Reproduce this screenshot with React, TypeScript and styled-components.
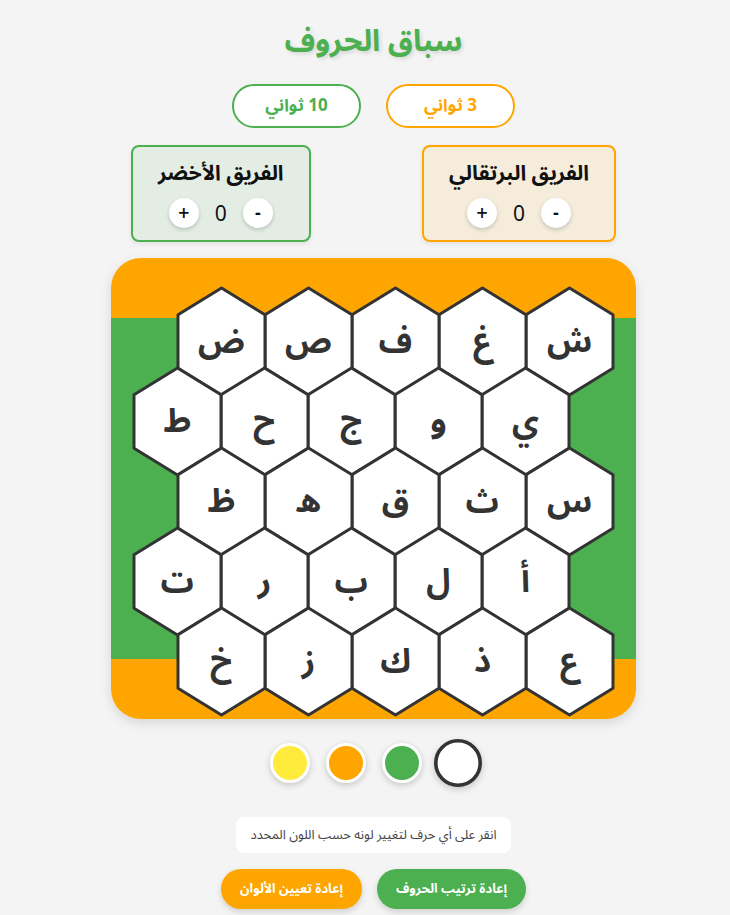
import React, { useState } from "react";
import styled, { createGlobalStyle } from "styled-components";

const ORANGE = "#FFA500";
const GREEN = "#4CAF50";
const YELLOW = "#FFEB3B";

const GlobalStyle = createGlobalStyle`
  html, body {
    margin: 0;
    padding: 0;
    background: #f4f4f4;
  }
  body {
    direction: rtl;
    font-family: "Noto Sans Arabic", "DejaVu Sans", sans-serif;
    color: #333;
  }
  * { box-sizing: border-box; }
`;

const Page = styled.div`
  display: flex;
  flex-direction: column;
  align-items: center;
  padding: 0 0 20px 17px;
`;

const Title = styled.h1`
  margin: 25px 0 0;
  font-size: 30px;
  line-height: 34px;
  font-weight: 700;
  color: ${GREEN};
  text-shadow: 2px 2px 4px rgba(0, 0, 0, 0.12);
`;

const TimerRow = styled.div`
  display: flex;
  gap: 25px;
  margin-top: 25px;
`;

const TimerButton = styled.button<{ $color: string }>`
  width: 129px;
  height: 44px;
  border-radius: 22px;
  border: 2px solid ${(p) => p.$color};
  background: #fff;
  color: ${(p) => p.$color};
  font-family: inherit;
  font-size: 17px;
  line-height: 20px;
  font-weight: 700;
  cursor: pointer;
`;

const TeamsRow = styled.div`
  width: 525px;
  display: flex;
  justify-content: space-between;
  padding: 0 20px;
  margin-top: 17px;
`;

const TeamCard = styled.div<{ $color: string; $bg: string }>`
  border: 2px solid ${(p) => p.$color};
  background: ${(p) => p.$bg};
  border-radius: 8px;
  padding: 13px 25px 12px;
  display: flex;
  flex-direction: column;
  align-items: center;
  box-shadow: 0 2px 5px rgba(0, 0, 0, 0.08);
`;

const TeamName = styled.div`
  font-size: 21px;
  line-height: 26px;
  height: 26px;
  font-weight: 700;
  color: #111;
  white-space: nowrap;
`;

const ScoreRow = styled.div`
  display: flex;
  align-items: center;
  gap: 12px;
  height: 30px;
  margin-top: 12px;
`;

const ScoreButton = styled.button`
  width: 30px;
  height: 30px;
  border-radius: 50%;
  border: none;
  background: #fff;
  box-shadow: 0 2px 4px rgba(0, 0, 0, 0.18);
  font-family: "DejaVu Sans", sans-serif;
  font-size: 15px;
  line-height: 30px;
  font-weight: 700;
  color: #111;
  display: flex;
  align-items: center;
  justify-content: center;
  padding: 0;
  cursor: pointer;
`;

const ScoreValue = styled.span`
  min-width: 20px;
  text-align: center;
  font-family: "Noto Sans", sans-serif;
  font-weight: 400;
  font-size: 21px;
  line-height: 30px;
  color: #111;
`;

const Board = styled.div`
  margin-top: 16px;
  width: 525px;
  border-radius: 30px;
  overflow: hidden;
  padding: 30px 0 4px;
  background: linear-gradient(
    to bottom,
    ${ORANGE} 0,
    ${ORANGE} 60px,
    ${GREEN} 60px,
    ${GREEN} calc(100% - 60px),
    ${ORANGE} calc(100% - 60px),
    ${ORANGE} 100%
  );
  box-shadow: 0 4px 12px rgba(0, 0, 0, 0.12);
  display: flex;
  flex-direction: column;
  align-items: center;
`;

const HexRow = styled.div<{ $odd: boolean }>`
  display: flex;
  justify-content: center;
  margin-top: -27px;
  padding-left: ${(p) => (p.$odd ? "44px" : "0")};
  padding-right: ${(p) => (p.$odd ? "0" : "44px")};
  &:first-child {
    margin-top: 0;
  }
`;

const HexCell = styled.div`
  position: relative;
  width: 87px;
  height: 107px;
  display: flex;
  align-items: center;
  justify-content: center;
  cursor: pointer;
`;

const HexShape = styled.svg`
  position: absolute;
  inset: 0;
  overflow: visible;
`;

const HexLetter = styled.span`
  position: relative;
  font-size: 33px;
  font-weight: 700;
  color: #333;
  line-height: 1;
`;

const ColorRow = styled.div`
  display: flex;
  gap: 16px;
  margin-top: 24px;
`;

const ColorDot = styled.button<{ $color: string; $selected: boolean }>`
  width: 40px;
  height: 40px;
  border-radius: 50%;
  background: ${(p) => p.$color};
  border: 3px solid ${(p) => (p.$selected ? "#333" : "#fff")};
  box-shadow: 0 2px 6px rgba(0, 0, 0, 0.2);
  transform: scale(${(p) => (p.$selected ? 1.2 : 1)});
  padding: 0;
  cursor: pointer;
`;

const Instructions = styled.div`
  margin-top: 34px;
  background: #fff;
  border-radius: 8px;
  padding: 10px 14px;
  font-size: 13px;
  line-height: 16px;
  color: #444;
`;

const ActionRow = styled.div`
  display: flex;
  gap: 15px;
  margin-top: 16px;
`;

const ActionButton = styled.button<{ $color: string }>`
  height: 40px;
  padding: 0 19px;
  border-radius: 20px;
  border: none;
  background: ${(p) => p.$color};
  color: #fff;
  font-family: inherit;
  font-size: 13px;
  line-height: 16px;
  font-weight: 700;
  box-shadow: 0 3px 6px rgba(0, 0, 0, 0.15);
  cursor: pointer;
`;

const ROWS = [
  ["ش", "غ", "ف", "ص", "ض"],
  ["ي", "و", "ج", "ح", "ط"],
  ["س", "ث", "ق", "ه", "ظ"],
  ["أ", "ل", "ب", "ر", "ت"],
  ["ع", "ذ", "ك", "ز", "خ"],
];

const HEX_POINTS = "43.5,0 87,26.75 87,80.25 43.5,107 0,80.25 0,26.75";

function Hex({ letter }: { letter: string }) {
  return (
    <HexCell>
      <HexShape width="87" height="107" viewBox="0 0 87 107">
        <polygon points={HEX_POINTS} fill="#fff" stroke="#333" strokeWidth="3" strokeLinejoin="round" />
      </HexShape>
      <HexLetter>{letter}</HexLetter>
    </HexCell>
  );
}

export default function App() {
  const [selected, setSelected] = useState("#fff");
  const [scores, setScores] = useState({ orange: 0, green: 0 });
  const colors = ["#fff", GREEN, ORANGE, YELLOW];

  return (
    <>
      <GlobalStyle />
      <Page>
        <Title>سباق الحروف</Title>
        <TimerRow>
          <TimerButton $color={ORANGE}>3 ثواني</TimerButton>
          <TimerButton $color={GREEN}>10 ثواني</TimerButton>
        </TimerRow>
        <TeamsRow>
          <TeamCard $color={ORANGE} $bg="#f5ecdc">
            <TeamName>الفريق البرتقالي</TeamName>
            <ScoreRow>
              <ScoreButton onClick={() => setScores((s) => ({ ...s, orange: s.orange - 1 }))}>-</ScoreButton>
              <ScoreValue>{scores.orange}</ScoreValue>
              <ScoreButton onClick={() => setScores((s) => ({ ...s, orange: s.orange + 1 }))}>+</ScoreButton>
            </ScoreRow>
          </TeamCard>
          <TeamCard $color={GREEN} $bg="#e3ede4">
            <TeamName>الفريق الأخضر</TeamName>
            <ScoreRow>
              <ScoreButton onClick={() => setScores((s) => ({ ...s, green: s.green - 1 }))}>-</ScoreButton>
              <ScoreValue>{scores.green}</ScoreValue>
              <ScoreButton onClick={() => setScores((s) => ({ ...s, green: s.green + 1 }))}>+</ScoreButton>
            </ScoreRow>
          </TeamCard>
        </TeamsRow>
        <Board>
          {ROWS.map((row, i) => (
            <HexRow key={i} $odd={i % 2 === 0}>
              {row.map((l) => (
                <Hex key={l} letter={l} />
              ))}
            </HexRow>
          ))}
        </Board>
        <ColorRow>
          {colors.map((c) => (
            <ColorDot key={c} $color={c} $selected={selected === c} onClick={() => setSelected(c)} />
          ))}
        </ColorRow>
        <Instructions>انقر على أي حرف لتغيير لونه حسب اللون المحدد</Instructions>
        <ActionRow>
          <ActionButton $color={GREEN}>إعادة ترتيب الحروف</ActionButton>
          <ActionButton $color={ORANGE}>إعادة تعيين الألوان</ActionButton>
        </ActionRow>
      </Page>
    </>
  );
}
